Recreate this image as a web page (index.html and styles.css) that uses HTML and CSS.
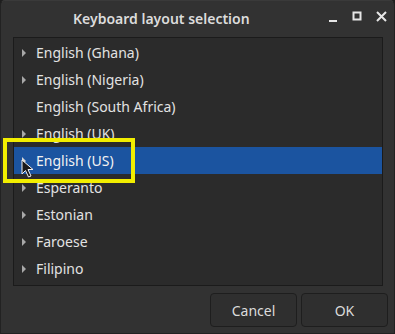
FILE: index.html
```html
<!DOCTYPE html>
<html lang="en">
<head>
    <meta charset="UTF-8">
    <title>Keyboard layout selection</title>
    <link rel="stylesheet" href="styles.css">
</head>
<body>
    <div class="window">
        <div class="titlebar">
            <span class="title">Keyboard layout selection</span>
            <div class="controls">
                <svg class="ctl" width="12" height="12" viewBox="0 0 12 12"><rect x="1" y="9" width="8" height="2" fill="#e6e6e6"/></svg>
                <svg class="ctl" width="12" height="12" viewBox="0 0 12 12"><rect x="1.5" y="1.5" width="7" height="7" fill="none" stroke="#e6e6e6" stroke-width="2"/></svg>
                <svg class="ctl" width="12" height="12" viewBox="0 0 12 12"><path d="M1 1 L10 10 M10 1 L1 10" stroke="#e6e6e6" stroke-width="2"/></svg>
            </div>
        </div>

        <div class="content">
            <ul class="list">
                <li><span class="arrow"></span>English (Ghana)</li>
                <li><span class="arrow"></span>English (Nigeria)</li>
                <li><span class="arrow none"></span>English (South Africa)</li>
                <li><span class="arrow"></span>English (UK)</li>
                <li class="selected"><span class="arrow"></span>English (US)</li>
                <li><span class="arrow"></span>Esperanto</li>
                <li><span class="arrow"></span>Estonian</li>
                <li><span class="arrow"></span>Faroese</li>
                <li><span class="arrow"></span>Filipino</li>
            </ul>

            <div class="buttons">
                <button class="btn btn-cancel">Cancel</button>
                <button class="btn btn-ok">OK</button>
            </div>
        </div>

        <!-- annotation overlay -->
        <div class="highlight"></div>
        <svg class="cursor" width="14" height="20" viewBox="0 0 14 20">
            <path d="M1 1 L1 15 L4.5 11.5 L7.5 18 L10 17 L7 10.5 L12 10.5 Z" fill="#1a1a1a" stroke="#f0f0f0" stroke-width="1"/>
        </svg>
    </div>
</body>
</html>
```

FILE: styles.css
```css
:root {
    --window-bg: #323232;
    --list-bg: #2b2b2b;
    --border-dark: #1b1b1b;
    --text: #e2e2e2;
    --arrow: #a8a8a8;
    --select: #1b54a0;
    --mark: #f2ee00;
}

* {
    margin: 0;
    padding: 0;
    box-sizing: border-box;
}

body {
    font-family: "Noto Sans", sans-serif;
    background: #1e1e1e;
    width: 395px;
    height: 334px;
    overflow: hidden;
}

.window {
    position: relative;
    width: 395px;
    height: 334px;
    background: var(--window-bg);
    border: 1px solid #222;
    border-top-color: #3a3a3a;
    border-radius: 5px 5px 0 0;
    display: flex;
    flex-direction: column;
}

.titlebar {
    height: 35px;
    display: flex;
    align-items: center;
    position: relative;
}

.title {
    margin-left: 72px;
    font-size: 14px;
    font-weight: 600;
    color: #dcdcdc;
}

.controls {
    margin-left: auto;
    margin-right: 6px;
    display: flex;
    gap: 12px;
    padding-bottom: 4px;
}

.content {
    flex: 1;
    padding: 1px 12px 0 12px;
    display: flex;
    flex-direction: column;
}

.list {
    list-style: none;
    background: var(--list-bg);
    border: 1px solid var(--border-dark);
    height: 249px;
    width: 370px;
    padding-top: 1px;
}

.list li {
    height: 27px;
    display: flex;
    align-items: center;
    font-size: 14px;
    color: var(--text);
    padding-left: 8px;
}

.list li.selected {
    background: var(--select);
    color: #f2f2f2;
}

.arrow {
    width: 0;
    height: 0;
    border-top: 4px solid transparent;
    border-bottom: 4px solid transparent;
    border-left: 4px solid var(--arrow);
    margin-right: 10px;
}

.arrow.none {
    border-left-color: transparent;
}

.selected .arrow {
    border-left-color: #d8d8d8;
}

.buttons {
    display: flex;
    justify-content: flex-end;
    gap: 4px;
    margin-top: 7px;
    margin-right: -6px;
}

.btn {
    height: 34px;
    background: #2f2f2f;
    border: 1px solid #1e1e1e;
    border-radius: 4px;
    color: #dcdcdc;
    font-family: "Noto Sans", sans-serif;
    font-size: 14px;
}

.btn-cancel {
    width: 87px;
}

.btn-ok {
    width: 87px;
}

.highlight {
    position: absolute;
    left: 2px;
    top: 137px;
    width: 132px;
    height: 45px;
    border: 4px solid var(--mark);
}

.cursor {
    position: absolute;
    left: 20px;
    top: 158px;
}
```
